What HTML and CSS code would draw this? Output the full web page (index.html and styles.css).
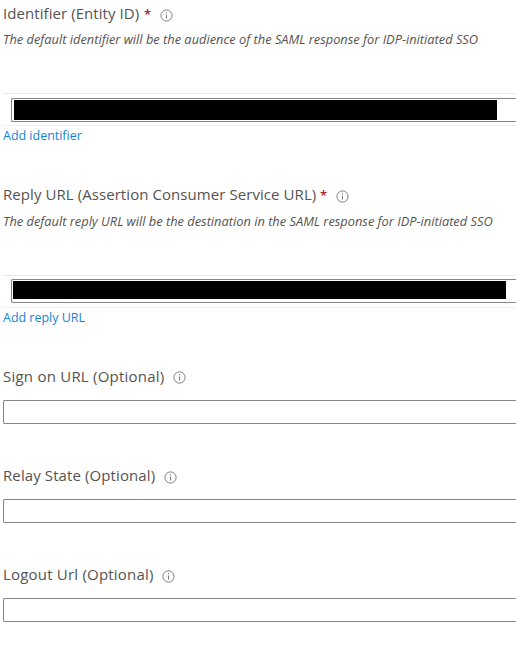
FILE: index.html
```html
<!DOCTYPE html>
<html lang="en">
<head>
<meta charset="utf-8">
<title>Basic SAML Configuration</title>
<link rel="stylesheet" href="styles.css">
</head>
<body>
<svg class="sprite" aria-hidden="true"><symbol id="info" viewBox="0 0 13 13"><circle cx="6.5" cy="6.5" r="5.6" fill="none" stroke="currentColor" stroke-width=".95"/><path d="M6.5 5.5v4M6.5 3.2v1.1" stroke="currentColor" stroke-width="1"/></symbol></svg>
<main class="form">
<section class="group group-identifier">
<h2 class="label"><span class="text t-identifier">Identifier (Entity ID)</span><span class="required">*</span><svg class="info"><use href="#info"/></svg></h2>
<p class="hint h-identifier">The default identifier will be the audience of the SAML response for IDP-initiated SSO</p>
<div class="row"><div class="input"><div class="redacted"></div></div></div>
<a class="link l-identifier">Add identifier</a>
</section>
<section class="group group-reply">
<h2 class="label"><span class="text t-reply">Reply URL (Assertion Consumer Service URL)</span><span class="required">*</span><svg class="info"><use href="#info"/></svg></h2>
<p class="hint h-reply">The default reply URL will be the destination in the SAML response for IDP-initiated SSO</p>
<div class="row"><div class="input"><div class="redacted"></div></div></div>
<a class="link l-reply">Add reply URL</a>
</section>
<section class="field field-sign">
<h2 class="label"><span class="text t-sign">Sign on URL (Optional)</span><svg class="info"><use href="#info"/></svg></h2>
<div class="input"></div>
</section>
<section class="field">
<h2 class="label"><span class="text t-relay">Relay State (Optional)</span><svg class="info"><use href="#info"/></svg></h2>
<div class="input"></div>
</section>
<section class="field">
<h2 class="label"><span class="text t-logout">Logout Url (Optional)</span><svg class="info"><use href="#info"/></svg></h2>
<div class="input"></div>
</section>
</main>
</body>
</html>
```
FILE: styles.css
```css
* { box-sizing: border-box; }
body { margin: 0; background: #fff; color: #555351; font-family: "Open Sans", "Noto Sans", sans-serif; overflow: hidden; }
.sprite { position: absolute; width: 0; height: 0; }
.form { padding-left: 3px; height: 659px; }
.label { display: flex; align-items: center; height: 28px; margin: 0; font-size: 15px; line-height: 26px; font-weight: 400; white-space: nowrap; }
.text { flex: none; height: 28px; }
.t-identifier { width: 136px; letter-spacing: .07px; }
.t-reply { width: 313px; letter-spacing: .07px; }
.t-sign { width: 161px; letter-spacing: .23px; }
.t-relay { width: 152px; letter-spacing: .1px; }
.t-logout { width: 150px; letter-spacing: .2px; }
.required { flex: none; width: 7px; height: 28px; margin-left: 5px; color: #a4262c; font-size: 13px; font-weight: 600; line-height: 28px; }
.info { flex: none; width: 13px; height: 13px; margin: 2px 0 0 9px; color: #777; }
.hint { height: 24px; margin: 0; font-size: 12.84px; line-height: 22px; font-style: italic; white-space: nowrap; }
.row { height: 33px; margin-top: 41px; padding: 4px 0 0 8px; border-top: 1px solid #eaeaea; border-bottom: 1px solid #f0f0f0; }
.input { height: 24px; border: 1px solid #858585; border-right: 0; border-radius: 2px 0 0 2px; }
.redacted { background: #000; }
.link { display: block; height: 20px; color: #1683d8; font-size: 12.5px; line-height: 20px; letter-spacing: -.02px; white-space: nowrap; }
.group-identifier { height: 181px; }
.group-identifier .redacted { width: 483px; height: 20px; margin: 1px 0 0 2px; }
.group-reply { height: 182px; }
.group-reply .required { margin-left: 4px; }
.group-reply .hint { height: 25px; line-height: 24px; }
.group-reply .row { padding-top: 3px; }
.group-reply .redacted { width: 493px; height: 18px; margin: 1px 0 0 1px; }
.field { height: 99px; }
.field .label { height: 37px; padding-bottom: 9px; }
.field-sign .info { margin-top: 1px; }
```
